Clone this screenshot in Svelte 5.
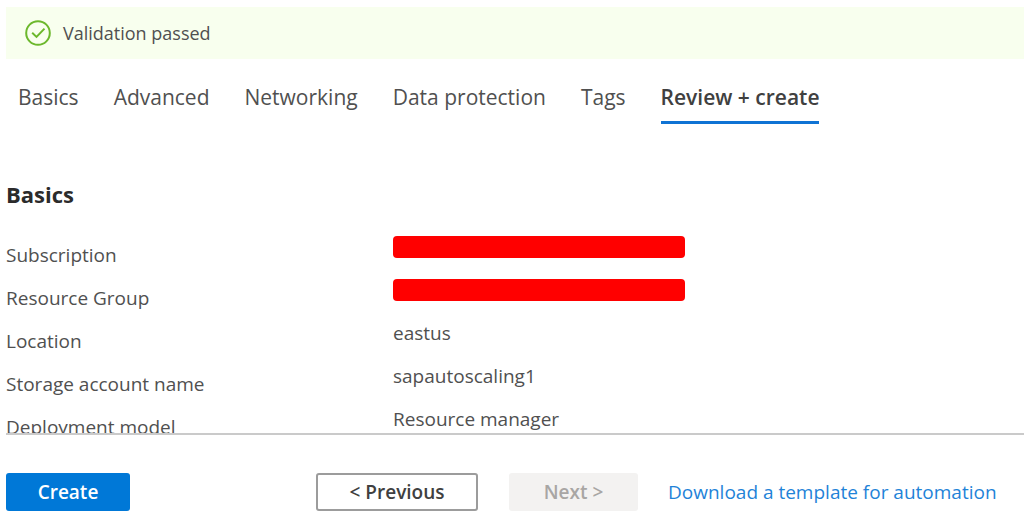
<script>
  const tabs = ["Basics", "Advanced", "Networking", "Data protection", "Tags", "Review + create"];
  let activeTab = $state("Review + create");

  const details = [
    { label: "Subscription", redacted: true },
    { label: "Resource Group", redacted: true },
    { label: "Location", value: "eastus" },
    { label: "Storage account name", value: "sapautoscaling1" },
    { label: "Deployment model", value: "Resource manager" },
  ];
</script>

<div class="page">
  <div class="banner" role="status">
    <svg class="check" viewBox="0 0 26 26" aria-hidden="true">
      <circle cx="13" cy="13" r="11.8" />
      <path d="M7.2 12.8l4.3 4.1 8-8.3" />
    </svg>
    <span>Validation passed</span>
  </div>

  <div class="tabs" role="tablist">
    {#each tabs as tab (tab)}
      <button
        class="tab"
        class:active={tab === activeTab}
        role="tab"
        aria-selected={tab === activeTab}
        onclick={() => (activeTab = tab)}
      >
        {tab}
      </button>
    {/each}
  </div>

  <section class="summary">
    <h2>Basics</h2>
    <dl>
      {#each details as item (item.label)}
        <div class="row">
          <dt>{item.label}</dt>
          <dd>
            {#if item.redacted}
              <span class="redacted"></span>
            {:else}
              {item.value}
            {/if}
          </dd>
        </div>
      {/each}
    </dl>
  </section>

  <footer>
    <button class="btn primary">Create</button>
    <button class="btn previous">&lt; Previous</button>
    <button class="btn next" disabled>Next &gt;</button>
    <a href="#template">Download a template for automation</a>
  </footer>
</div>

<style>
  :global(body) {
    background: #fff;
  }

  .page {
    font-family: "Open Sans", "Noto Sans", sans-serif;
    font-size: 19px;
    color: #505050;
    padding: 7px 0 0 6px;
  }

  button {
    font-family: inherit;
    cursor: pointer;
  }

  .banner {
    display: flex;
    align-items: center;
    gap: 12px;
    height: 52px;
    padding-left: 19px;
    background: #f8ffee;
    font-size: 18px;
  }

  .check {
    width: 26px;
    height: 26px;
    fill: none;
    stroke: #6cb82c;
    stroke-width: 2;
  }

  .tabs {
    display: flex;
    gap: 35px;
    padding: 16px 12px 0;
  }

  .tab {
    height: 49px;
    padding: 0 0 2px;
    border: 0;
    border-bottom: 3px solid transparent;
    background: none;
    color: inherit;
    font-size: 21px;
    white-space: nowrap;
  }

  .tab.active {
    border-color: #0f73d4;
    color: #404040;
    font-weight: 600;
  }

  .summary {
    height: 255px;
    padding-top: 54px;
    overflow: hidden;
  }

  h2 {
    margin: 0;
    color: #2b2b2b;
    font-size: 22px;
    font-weight: 700;
    line-height: 32px;
  }

  dl {
    margin: 22px 0 0;
  }

  .row {
    display: grid;
    grid-template-columns: 387px 1fr;
    height: 43px;
    line-height: 24px;
  }

  dt {
    padding-top: 11px;
  }

  dd {
    margin: 0;
    padding-top: 3px;
  }

  .redacted {
    display: block;
    width: 292px;
    height: 22px;
    margin-top: 1px;
    border-radius: 4px;
    background: #f00;
  }

  footer {
    display: flex;
    align-items: center;
    padding-top: 38px;
    border-top: 2px solid #cacaca;
  }

  .btn {
    height: 38px;
    padding: 0;
    border: 2px solid transparent;
    border-radius: 3px;
    font-size: 19px;
    font-weight: 600;
  }

  .primary {
    width: 124px;
    margin-right: 186px;
    background: #0078d7;
    color: #fff;
  }

  .previous {
    width: 162px;
    margin-right: 31px;
    border-color: #9c9c9c;
    background: #fff;
    color: #404040;
  }

  .next {
    width: 129px;
    margin-right: 30px;
    background: #f3f2f1;
    color: #a8a6a4;
  }

  a {
    color: #1f83d8;
    text-decoration: none;
    white-space: nowrap;
  }
</style>
